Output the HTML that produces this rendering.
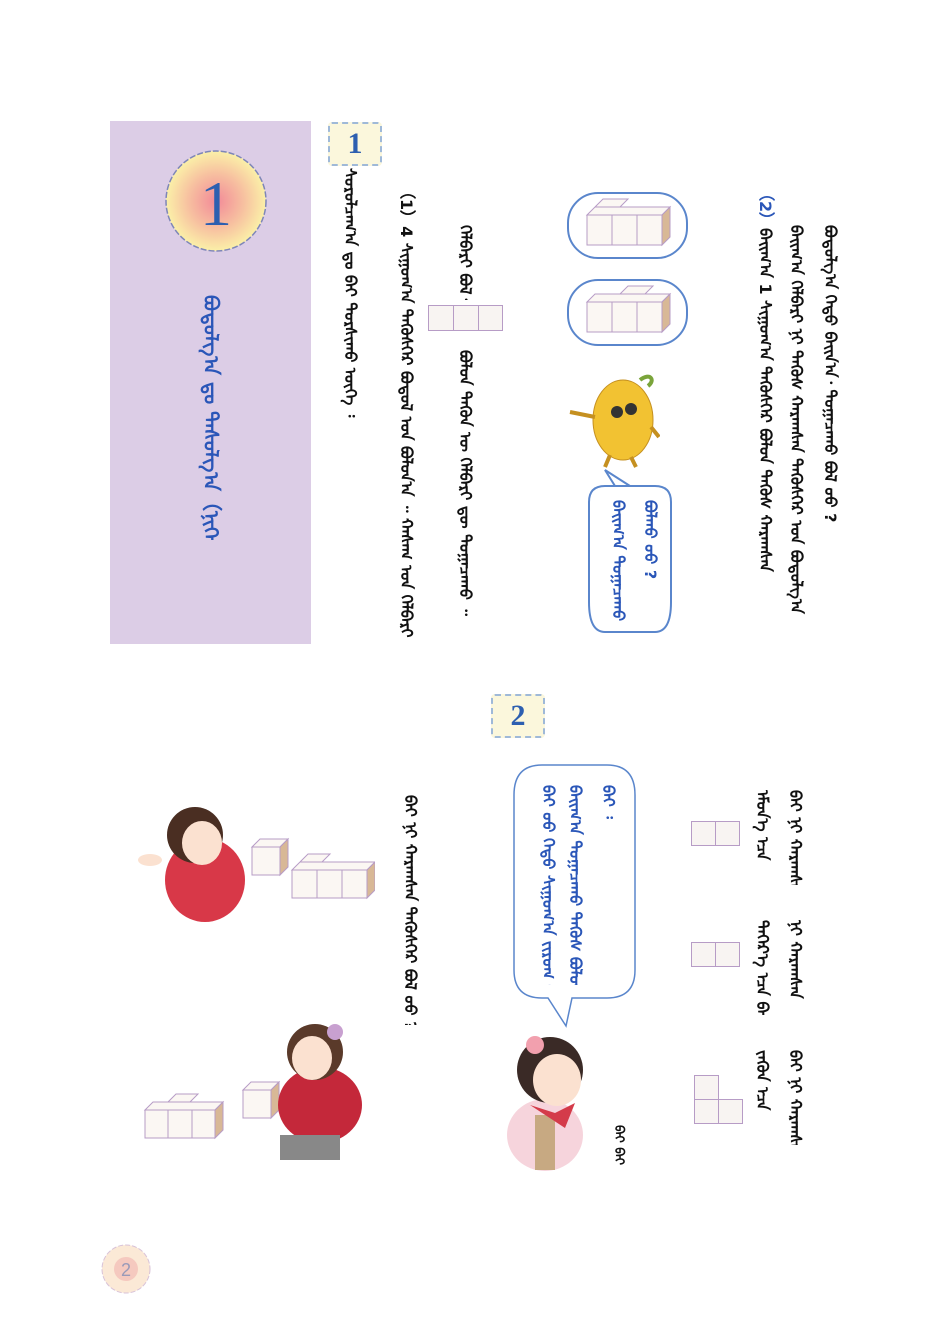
<!DOCTYPE html>
<html><head><meta charset="utf-8"><style>
body{margin:0;background:#fff;}
#p{position:relative;width:940px;height:1337px;overflow:hidden;background:#fff;font-family:"Liberation Sans","DejaVu Sans",sans-serif;}
.a{position:absolute;}
.t{position:absolute;writing-mode:vertical-lr;font-size:16px;line-height:20px;color:#111;font-weight:bold;white-space:nowrap;overflow:hidden;font-family:"DejaVu Sans","Liberation Sans",sans-serif;}
.b{color:#2a56b8;}
.sq{position:absolute;background:#f8f4f2;border:1px solid #b79cc6;box-sizing:border-box;}
</style></head><body><div id="p">
<div class="a" style="left:110px;top:121px;width:201px;height:523px;background:#dccde6"></div>
<svg class="a" style="left:160px;top:145px" width="112" height="112" viewBox="0 0 112 112">
<defs><radialGradient id="g"><stop offset="0" stop-color="#f28a98"/><stop offset="0.55" stop-color="#f7c0a0"/><stop offset="1" stop-color="#fbf0a8"/></radialGradient></defs>
<circle cx="56" cy="56" r="50" fill="url(#g)" stroke="#7e86b8" stroke-width="1.5" stroke-dasharray="6 2"/>
<text x="56" y="80" text-anchor="middle" font-family="Liberation Serif" font-size="64" fill="#2d5fb0">1</text></svg>
<div class="t b" style="left:198px;top:295px;height:245px;font-size:20px;line-height:26px;font-weight:bold">ᠪᠣᠳᠣᠯᠭ᠎ᠠ ᠳᠤ ᠳᠠᠰᠤᠯᠭ᠎ᠠ（ᠨᠢᠭᠡ）</div>
<div class="a" style="left:328px;top:122px;width:54px;height:44px;background:#fbf7dc;border:2px dashed #9fb9d8;box-sizing:border-box;border-radius:4px;text-align:center;font:bold 30px/40px 'Liberation Serif';color:#2d5fb0">1</div>
<div class="t" style="left:340px;top:168px;height:255px">ᠰᠤᠷᠤᠯᠴᠠᠭ᠎ᠠ ᠳᠤ ᠪᠠᠢ ᠲᠤᠷᠰᠢᠬᠤ ᠦᠭᠡ ᠄</div>
<div class="t" style="left:396px;top:183px;height:465px">（1）4 ᠰᠢᠭᠤᠭ᠎ᠠ ᠲᠡᠭᠦᠰᠬᠡᠷ ᠪᠣᠳᠣᠯ ᠤᠨ ᠪᠣᠯᠣᠨ᠎ᠠ ᠃ ᠬᠠᠰᠠᠭ ᠤᠨ ᠬᠡᠯᠪᠡᠷᠢ</div>
<div class="t" style="left:455px;top:225px;height:75px">ᠬᠡᠯᠪᠡᠷᠢ ᠪᠣᠯ᠃</div>
<div class="t" style="left:455px;top:350px;height:290px">ᠪᠣᠯᠣᠨ ᠲᠡᠭᠦᠨ ᠦ ᠬᠡᠯᠪᠡᠷᠢ ᠳᠦ ᠲᠣᠭᠠᠴᠠᠬᠤ ᠃</div>
<div class="sq" style="left:428px;top:305px;width:26px;height:26px"></div>
<div class="sq" style="left:453px;top:305px;width:26px;height:26px"></div>
<div class="sq" style="left:478px;top:305px;width:25px;height:26px"></div>
<div class="t" style="left:820px;top:225px;height:380px">ᠪᠣᠳᠣᠯᠭ᠎ᠠ ᠬᠡᠳᠦ ᠪᠠᠢᠨ᠎ᠠ᠂ ᠲᠣᠭᠠᠴᠠᠬᠤ ᠪᠣᠯ ᠤᠤ ?</div>
<div class="t" style="left:786px;top:225px;height:425px">ᠪᠠᠢᠭ᠎ᠠ ᠬᠡᠯᠪᠡᠷᠢ ᠨᠢ ᠲᠡᠭᠦᠰ ᠬᠠᠷᠠᠭᠰᠠᠨ ᠲᠡᠭᠦᠰᠬᠡᠷ ᠤᠨ ᠪᠣᠳᠣᠯᠭ᠎ᠠ</div>
<div class="t" style="left:755px;top:185px;height:465px"><span class="b">（2）</span>ᠪᠠᠢᠭ᠎ᠠ 1 ᠰᠢᠭᠤᠭ᠎ᠠ ᠲᠡᠭᠦᠰᠬᠡᠷ ᠪᠣᠯᠣᠨ ᠲᠡᠭᠦᠰ ᠬᠠᠷᠠᠭᠰᠠᠨ</div>
<svg class="a" style="left:565px;top:190px" width="125" height="160" viewBox="0 0 125 160">
<rect x="3" y="3" width="119" height="65" rx="30" fill="none" stroke="#5a86cc" stroke-width="2"/>
<rect x="3" y="90" width="119" height="65" rx="30" fill="none" stroke="#5a86cc" stroke-width="2"/>
<g stroke="#b79cc6" fill="#fbf7f3"><path d="M22 25h75v30h-75z M47 25v30 M72 25v30"/><path d="M22 25l8-8h75l-8 8z M30 17l8-8h25l-8 8"/><path d="M97 25l8-8v30l-8 8z" fill="#d8b896"/>
<path d="M22 112h75v30h-75z M47 112v30 M72 112v30"/><path d="M22 112l8-8h75l-8 8z M55 104l8-8h25l-8 8"/><path d="M97 112l8-8v30l-8 8z" fill="#d8b896"/></g></svg>
<svg class="a" style="left:565px;top:365px" width="95" height="105" viewBox="0 0 95 105">
<ellipse cx="58" cy="55" rx="30" ry="40" fill="#f2c232" stroke="#c59020"/>
<path d="M75 15c10-8 16 0 8 6" stroke="#7aa43a" stroke-width="4" fill="none"/>
<circle cx="52" cy="47" r="6" fill="#333"/><circle cx="66" cy="44" r="6" fill="#333"/>
<path d="M30 52l-25-5 M86 62l8 10 M45 90l-5 12 M66 92l5 10" stroke="#c59020" stroke-width="4"/></svg>
<svg class="a" style="left:585px;top:468px" width="95" height="172" viewBox="0 0 95 172"><path d="M20 18h50q16 0 16 16v100q0 30-16 30h-50q-16 0-16-30v-100q0-16 16-16h10l-10-16 25 16" fill="#fff" stroke="#5a86cc" stroke-width="2"/></svg>
<div class="t b" style="left:640px;top:500px;height:80px">ᠪᠣᠯᠬᠤ ᠤᠤ ?</div>
<div class="t b" style="left:608px;top:500px;height:125px">ᠪᠠᠢᠭ᠎ᠠ ᠲᠣᠭᠠᠴᠠᠬᠤ ᠲᠡᠭᠦᠰ</div>
<div class="a" style="left:491px;top:694px;width:54px;height:44px;background:#fbf7dc;border:2px dashed #9fb9d8;box-sizing:border-box;border-radius:4px;text-align:center;font:bold 30px/40px 'Liberation Serif';color:#2d5fb0">2</div>
<div class="t" style="left:785px;top:790px;height:95px">ᠪᠠᠢ ᠨᠢ ᠬᠠᠷᠠᠭᠰᠠᠨ</div>
<div class="t" style="left:752px;top:790px;height:95px">ᠡᠮᠦᠨ᠎ᠡ ᠡᠴᠡ</div>
<div class="t" style="left:785px;top:920px;height:95px">ᠨᠢ ᠬᠠᠷᠠᠭᠰᠠᠨ</div>
<div class="t" style="left:752px;top:920px;height:95px">ᠳᠡᠭᠡᠷ᠎ᠡ ᠡᠴᠡ ᠪᠠᠢ</div>
<div class="t" style="left:785px;top:1050px;height:95px">ᠪᠠᠢ ᠨᠢ ᠬᠠᠷᠠᠭᠰᠠᠨ</div>
<div class="t" style="left:752px;top:1050px;height:95px">ᠵᠡᠭᠦᠨ ᠡᠴᠡ</div>
<div class="sq" style="left:691px;top:821px;width:25px;height:25px"></div>
<div class="sq" style="left:715px;top:821px;width:25px;height:25px"></div>
<div class="sq" style="left:691px;top:942px;width:25px;height:25px"></div>
<div class="sq" style="left:715px;top:942px;width:25px;height:25px"></div>
<div class="sq" style="left:694px;top:1075px;width:25px;height:25px"></div>
<div class="sq" style="left:694px;top:1099px;width:25px;height:25px"></div>
<div class="sq" style="left:718px;top:1099px;width:25px;height:25px"></div>
<svg class="a" style="left:512px;top:763px" width="126" height="265" viewBox="0 0 126 265"><path d="M30 2h65q28 0 28 30v175q0 28-28 28h-35l-6 28-18-28h-6q-28 0-28-28v-175q0-30 28-30z" fill="#fff" stroke="#5a86cc" stroke-width="1.5"/></svg>
<div class="t b" style="left:598px;top:785px;height:50px">ᠪᠠᠢ ᠄</div>
<div class="t b" style="left:565px;top:785px;height:200px">ᠪᠠᠢᠭ᠎ᠠ ᠲᠣᠭᠠᠴᠠᠬᠤ ᠲᠡᠭᠦᠰ ᠪᠣᠯᠣᠨ</div>
<div class="t b" style="left:538px;top:785px;height:200px">ᠪᠠᠢ ᠤᠤ ᠬᠡᠳᠦ ᠰᠢᠭᠤᠭ᠎ᠠ ᠵᠢᠷᠤᠭ ᠪᠠᠢ</div>
<div class="t" style="left:608px;top:1125px;height:45px;font-size:13px">ᠪᠠᠢ ᠪᠠᠢ</div>
<svg class="a" style="left:495px;top:1030px" width="120" height="145" viewBox="0 0 120 145">
<ellipse cx="50" cy="105" rx="38" ry="36" fill="#f6d4dc"/><rect x="40" y="85" width="20" height="55" fill="#c7a982"/>
<circle cx="55" cy="40" r="33" fill="#3a2a26"/><ellipse cx="62" cy="50" rx="24" ry="26" fill="#fbe1d0"/>
<path d="M35 75l25 8 20-10-10 25z" fill="#d43b4a"/><circle cx="40" cy="15" r="9" fill="#f2a0ae"/></svg>
<div class="t" style="left:400px;top:795px;height:230px">ᠪᠠᠢ ᠨᠢ ᠬᠠᠷᠠᠭᠰᠠᠨ ᠲᠡᠭᠦᠰᠬᠡᠷ ᠪᠣᠯ ᠤᠤ ?</div>
<svg class="a" style="left:130px;top:805px" width="245" height="120" viewBox="0 0 245 120">
<ellipse cx="75" cy="75" rx="40" ry="42" fill="#d83848"/><circle cx="65" cy="30" r="28" fill="#4a2e22"/><ellipse cx="72" cy="38" rx="20" ry="22" fill="#fbe1d0"/>
<ellipse cx="20" cy="55" rx="12" ry="6" fill="#fbe1d0"/>
<g stroke="#b79cc6" fill="#fbf7f3"><path d="M122 42h28v28h-28z M122 42l8-8h28l-8 8z"/><path d="M150 42l8-8v28l-8 8z" fill="#d8b896"/>
<path d="M162 65h75v28h-75z M187 65v28 M212 65v28 M162 65l8-8h75l-8 8z M170 57l8-8h22l-8 8"/><path d="M237 65l8-8v28l-8 8z" fill="#d8b896"/></g></svg>
<svg class="a" style="left:140px;top:1020px" width="230" height="145" viewBox="0 0 230 145">
<g stroke="#b79cc6" fill="#fbf7f3"><path d="M5 90h70v28h-70z M28 90v28 M52 90v28 M5 90l8-8h70l-8 8z M28 82l8-8h22l-8 8"/><path d="M75 90l8-8v28l-8 8z" fill="#d8b896"/>
<path d="M103 70h28v28h-28z M103 70l8-8h28l-8 8z"/><path d="M131 70l8-8v28l-8 8z" fill="#d8b896"/></g>
<ellipse cx="180" cy="85" rx="42" ry="38" fill="#c4283a"/><rect x="140" y="115" width="60" height="25" fill="#888"/>
<circle cx="175" cy="32" r="28" fill="#5a3a2a"/><ellipse cx="172" cy="38" rx="20" ry="22" fill="#fbe1d0"/><circle cx="195" cy="12" r="8" fill="#c8a0d0"/></svg>
<svg class="a" style="left:98px;top:1242px" width="56" height="54" viewBox="0 0 56 54">
<circle cx="28" cy="27" r="24" fill="#fbe9d6" stroke="#d8c2d8" stroke-dasharray="5 2"/><circle cx="28" cy="27" r="12" fill="#f5c9bf"/>
<text x="28" y="34" text-anchor="middle" font-family="Liberation Sans" font-size="18" fill="#9a9ab8">2</text></svg>
</div></body></html>
